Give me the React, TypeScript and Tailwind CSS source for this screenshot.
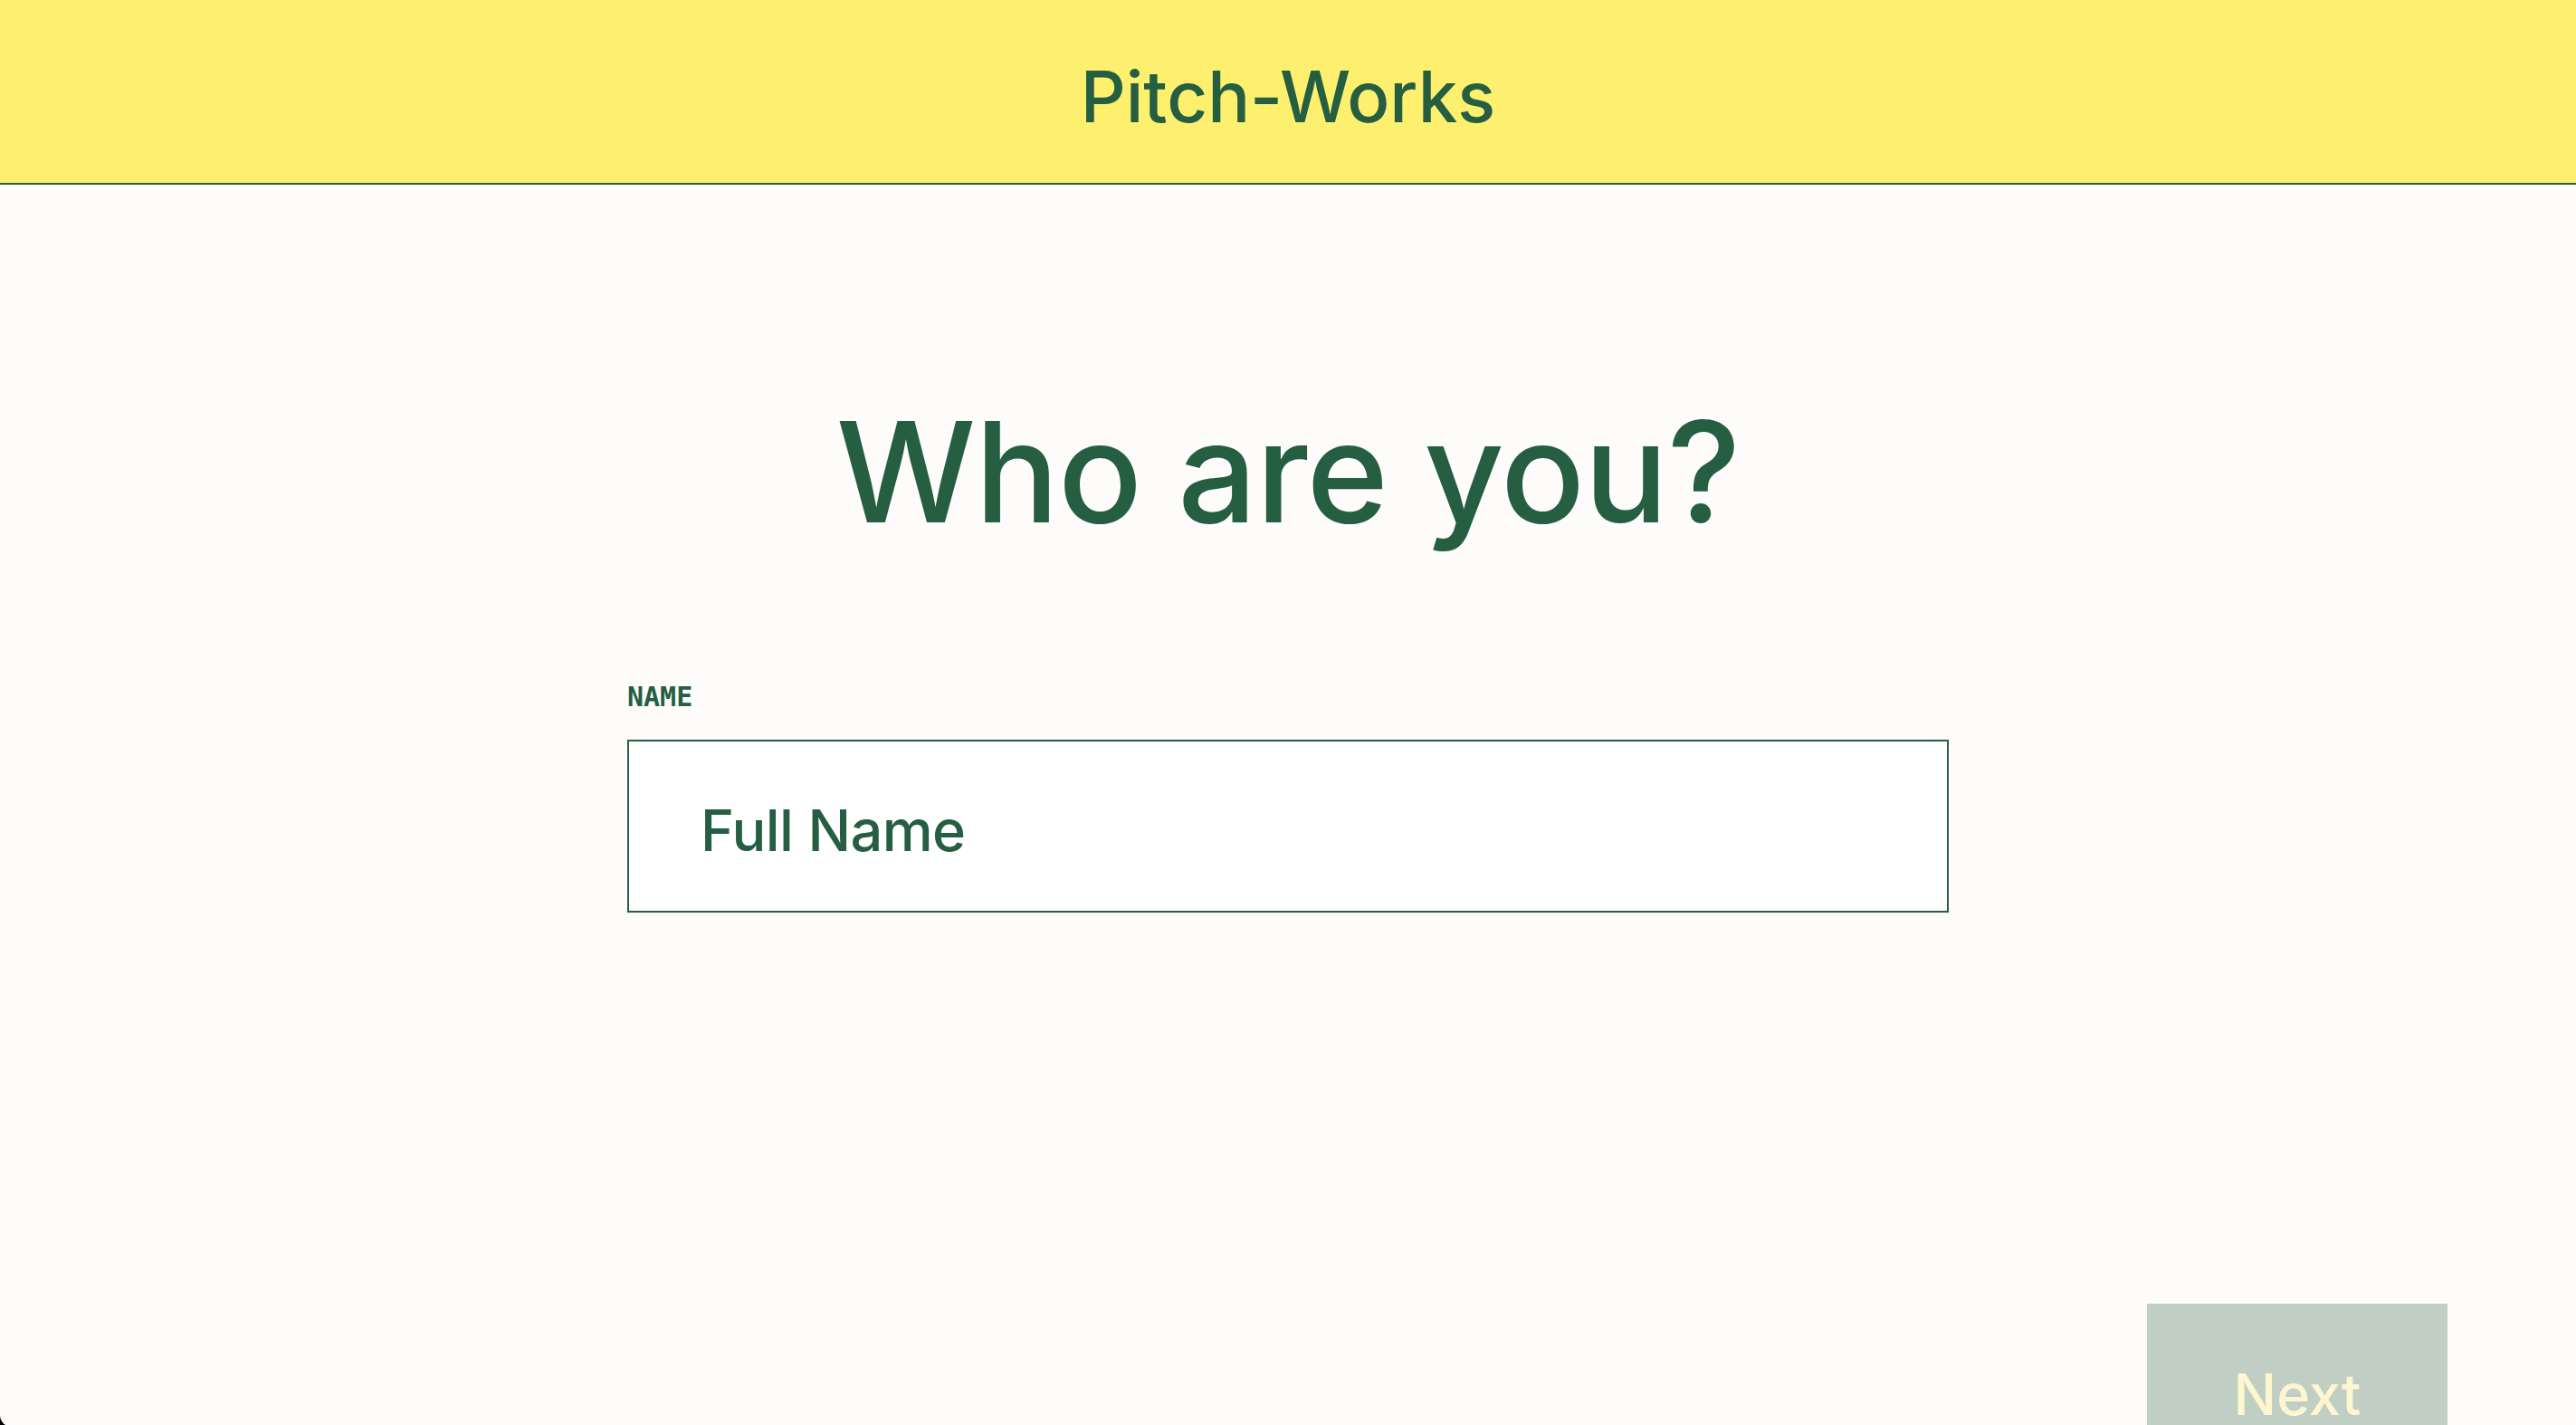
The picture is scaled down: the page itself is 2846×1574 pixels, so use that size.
import { useState } from 'react'

const sans = { fontFamily: 'Inter, "Liberation Sans", sans-serif' }
const mono = { fontFamily: '"DejaVu Sans Mono", "Liberation Mono", monospace' }

export default function App() {
  const [name, setName] = useState('')

  return (
    <div className="h-screen overflow-hidden bg-black">
      <div className="h-[1576px] rounded-bl-[13px] bg-[#fdfcfa] flex flex-col" style={sans}>
        {/* top bar */}
        <header className="h-[204px] shrink-0 border-b-2 border-[#265e42] bg-[#fcf06e] flex items-center justify-center pt-[11px]">
          <h1 className="text-[78px] leading-none font-medium text-[#265e42]">Pitch-Works</h1>
        </header>

        <main className="flex flex-col items-center">
          <h2 className="mt-[240px] text-[154px] leading-none font-medium tracking-[-0.9px] text-[#265e42]">Who are you?</h2>

          <div className="mt-[157px] w-[1460px] flex flex-col">
            <label htmlFor="name" className="text-[30px] leading-none font-bold text-[#265e42]" style={mono}>
              NAME
            </label>
            <input
              id="name"
              value={name}
              onChange={(e) => setName(e.target.value)}
              placeholder="Full Name"
              className="mt-[32px] h-[191px] w-full border-2 border-[#265e42] bg-white pl-[79px] pt-[8px] text-[63px] leading-none font-medium tracking-[-0.6px] text-[#265e42] placeholder:text-[#265e42] outline-none"
              style={sans}
            />
          </div>
        </main>

        <div className="mt-[432px] flex justify-end pr-[142px]">
          <button
            disabled={!name}
            className="w-[332px] h-[200px] shrink-0 bg-[#c0cec4] pt-[69px] text-[63px] leading-none font-medium text-[#fdf6d0] flex justify-center items-start"
            style={sans}
          >
            Next
          </button>
        </div>
      </div>
    </div>
  )
}
